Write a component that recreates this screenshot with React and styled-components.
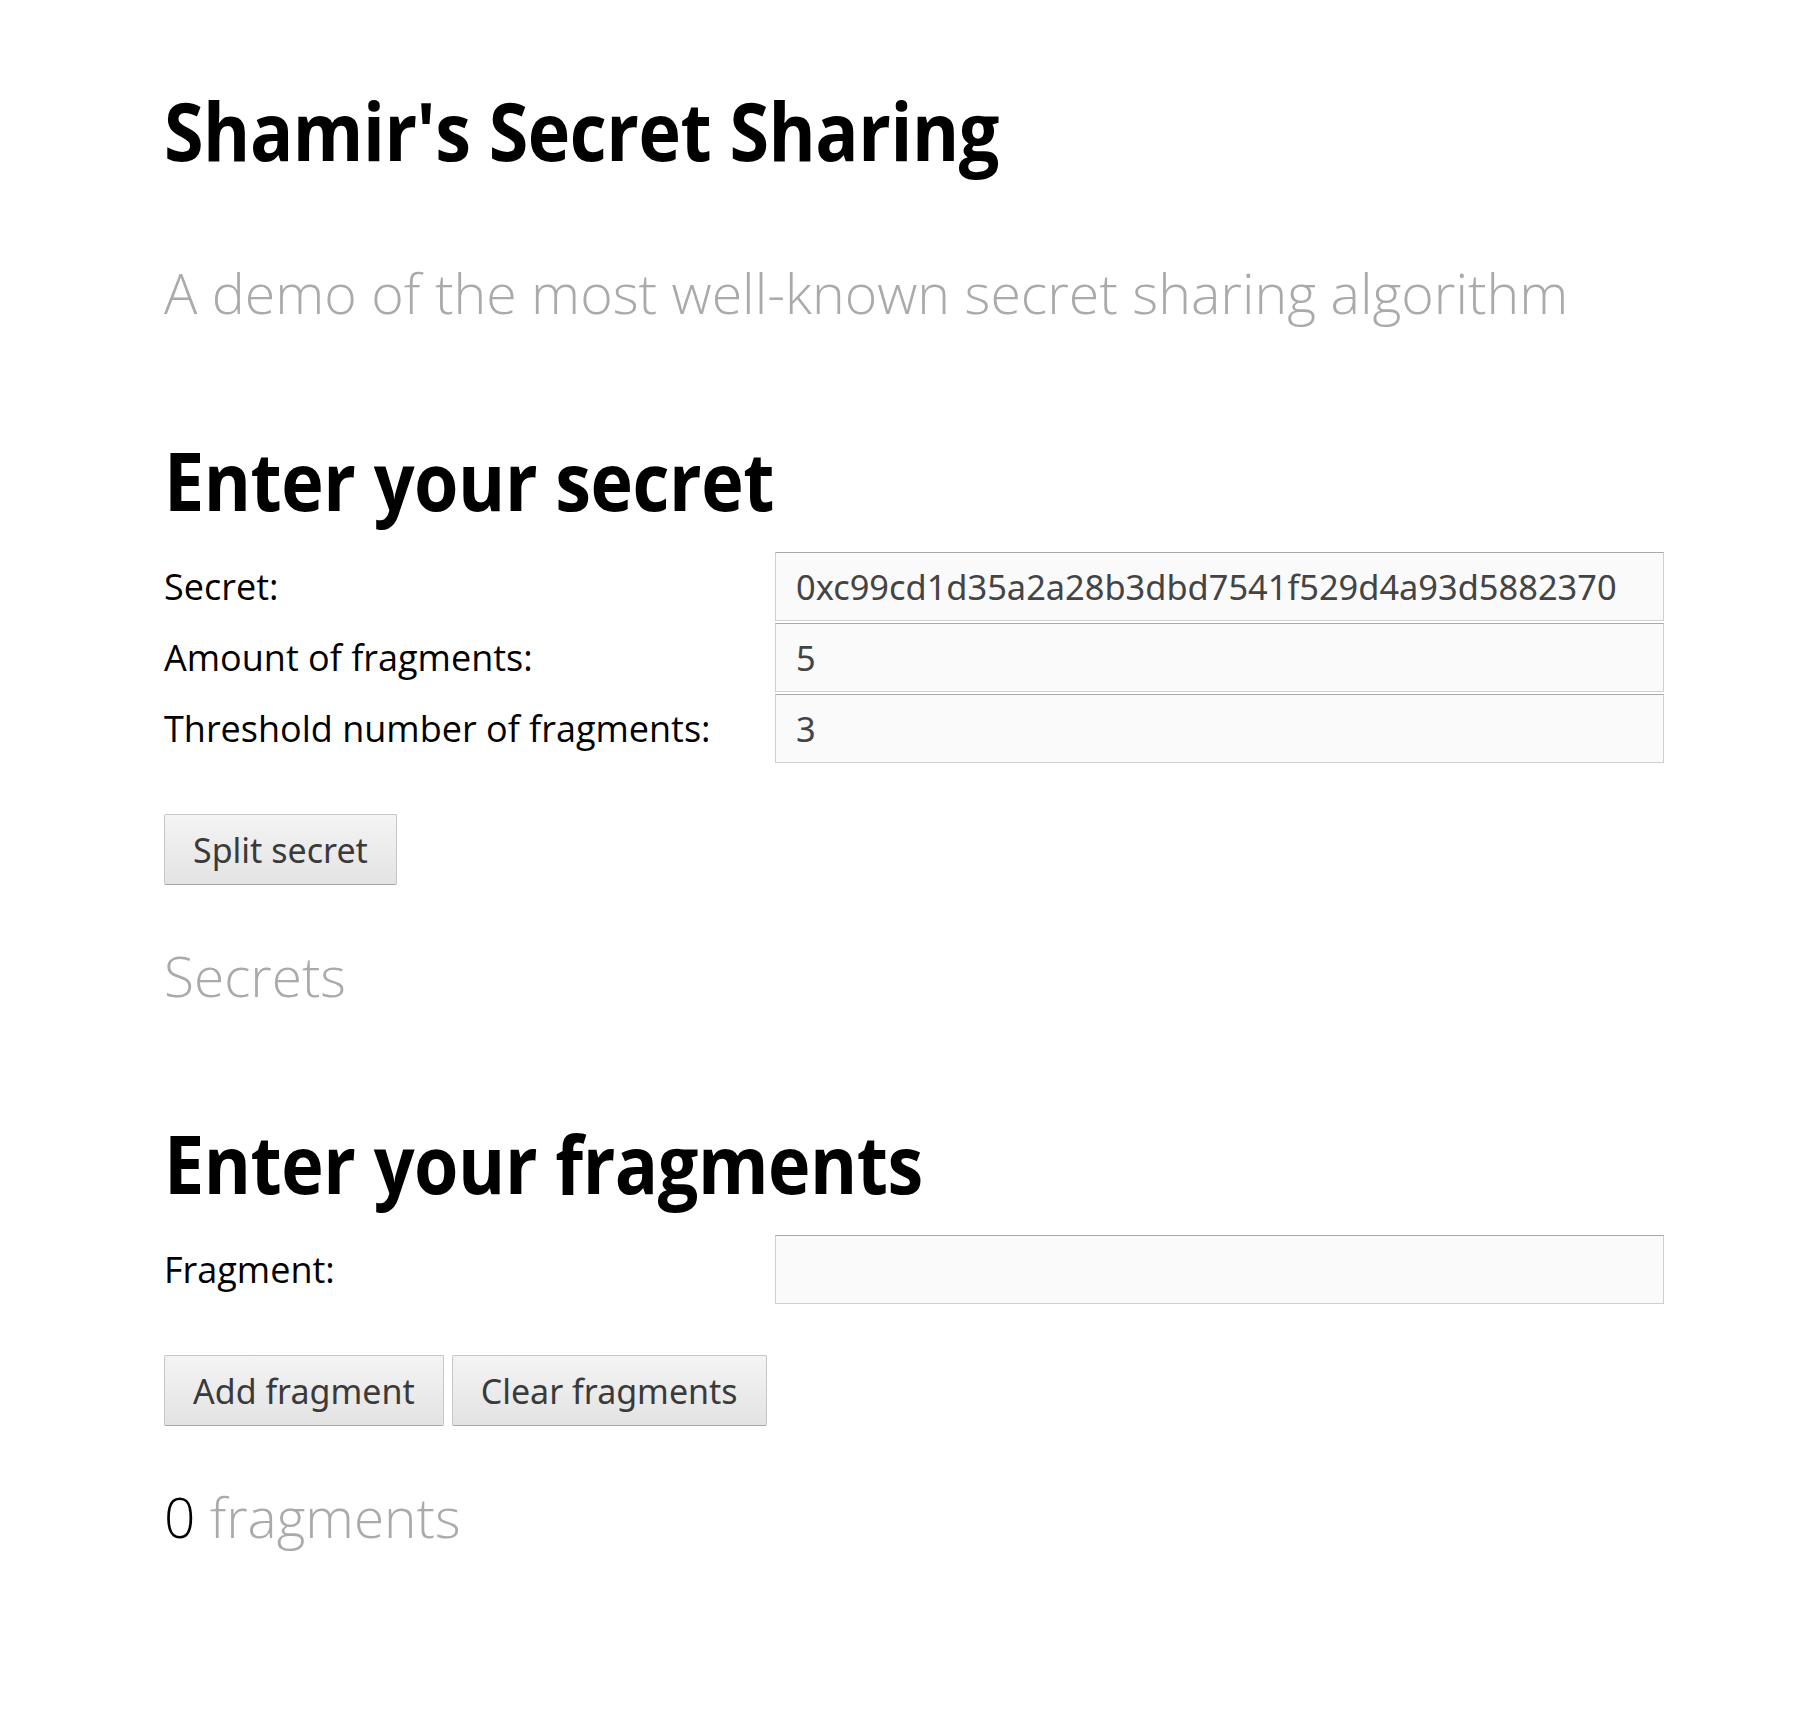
import React from 'react';
import styled, { createGlobalStyle } from 'styled-components';

const GlobalStyle = createGlobalStyle`
  html, body {
    margin: 0;
    padding: 0;
    background: #fff;
  }
  body {
    font-family: 'Open Sans', 'Noto Sans', sans-serif;
    color: #000;
  }
`;

export default function App() {
  return (
    <>
      <GlobalStyle />
      <Page>
        <Title>Shamir's Secret Sharing</Title>
        <Subtitle>A demo of the most well-known secret sharing algorithm</Subtitle>

        <Section>
          <Heading>Enter your secret</Heading>
          <Form>
            <Label htmlFor="secret">Secret:</Label>
            <Input id="secret" defaultValue="0xc99cd1d35a2a28b3dbd7541f529d4a93d5882370" />
            <Label htmlFor="amount">Amount of fragments:</Label>
            <Input id="amount" defaultValue="5" />
            <Label htmlFor="threshold">Threshold number of fragments:</Label>
            <Input id="threshold" defaultValue="3" />
          </Form>
          <Buttons>
            <Button>Split secret</Button>
          </Buttons>
          <Note>Secrets</Note>
        </Section>

        <Section>
          <Heading>Enter your fragments</Heading>
          <Form>
            <Label htmlFor="fragment">Fragment:</Label>
            <Input id="fragment" />
          </Form>
          <Buttons>
            <Button>Add fragment</Button>
            <Button>Clear fragments</Button>
          </Buttons>
          <Note><Count>0</Count> fragments</Note>
        </Section>
      </Page>
    </>
  );
}

/* Styled Components */

const Page = styled.main`
  width: 1500px;
  min-height: 1723px;
  box-sizing: border-box;
  padding: 82px 0 0 164px;
`;

const Title = styled.h1`
  margin: 0;
  font-size: 80px;
  line-height: 96px;
  font-weight: 700;
  letter-spacing: -0.5px;
  white-space: nowrap;
  transform: scaleX(0.898);
  transform-origin: left center;
`;

const Subtitle = styled.p`
  margin: 79px 0 0;
  font-size: 55.5px;
  line-height: 72px;
  font-weight: 300;
  color: #aaa;
  white-space: nowrap;
`;

const Section = styled.section`
  margin-top: 103px;

  & + & {
    margin-top: 106px;
  }
`;

const Heading = styled.h2`
  margin: 0;
  font-size: 80px;
  line-height: 96px;
  font-weight: 700;
  letter-spacing: -0.5px;
  white-space: nowrap;
  transform: scaleX(0.898);
  transform-origin: left center;
`;

const Form = styled.div`
  margin-top: 24px;
  display: grid;
  grid-template-columns: 611px 889px;
  row-gap: 2px;
  align-items: center;
`;

const Label = styled.label`
  font-size: 36px;
  line-height: 69px;
  white-space: nowrap;
`;

const Input = styled.input`
  box-sizing: border-box;
  width: 100%;
  height: 69px;
  margin: 0;
  padding: 0 20px;
  border: 1px solid #cfcfcf;
  border-top-color: #a9a9a9;
  border-radius: 0;
  background: #fafafa;
  font-family: 'Noto Sans', 'Open Sans', sans-serif;
  font-size: 34.4px;
  color: #444;
  outline: none;
`;

const Buttons = styled.div`
  margin-top: 51px;
  display: flex;
  gap: 8px;
`;

const Button = styled.button`
  box-sizing: border-box;
  height: 71px;
  margin: 0;
  padding: 0 28px;
  border: 1px solid #c6c6c6;
  border-bottom-color: #a6a6a6;
  border-radius: 2px;
  background: linear-gradient(#f4f4f4, #e2e3e2);
  font-family: 'Noto Sans', 'Open Sans', sans-serif;
  font-size: 34px;
  color: #3a3a3a;
  white-space: nowrap;
  cursor: pointer;
`;

const Note = styled.p`
  margin: 57px 0 0;
  font-size: 55px;
  line-height: 67px;
  font-weight: 300;
  color: #aaa;
  white-space: nowrap;
`;

const Count = styled.span`
  color: #000;
`;
